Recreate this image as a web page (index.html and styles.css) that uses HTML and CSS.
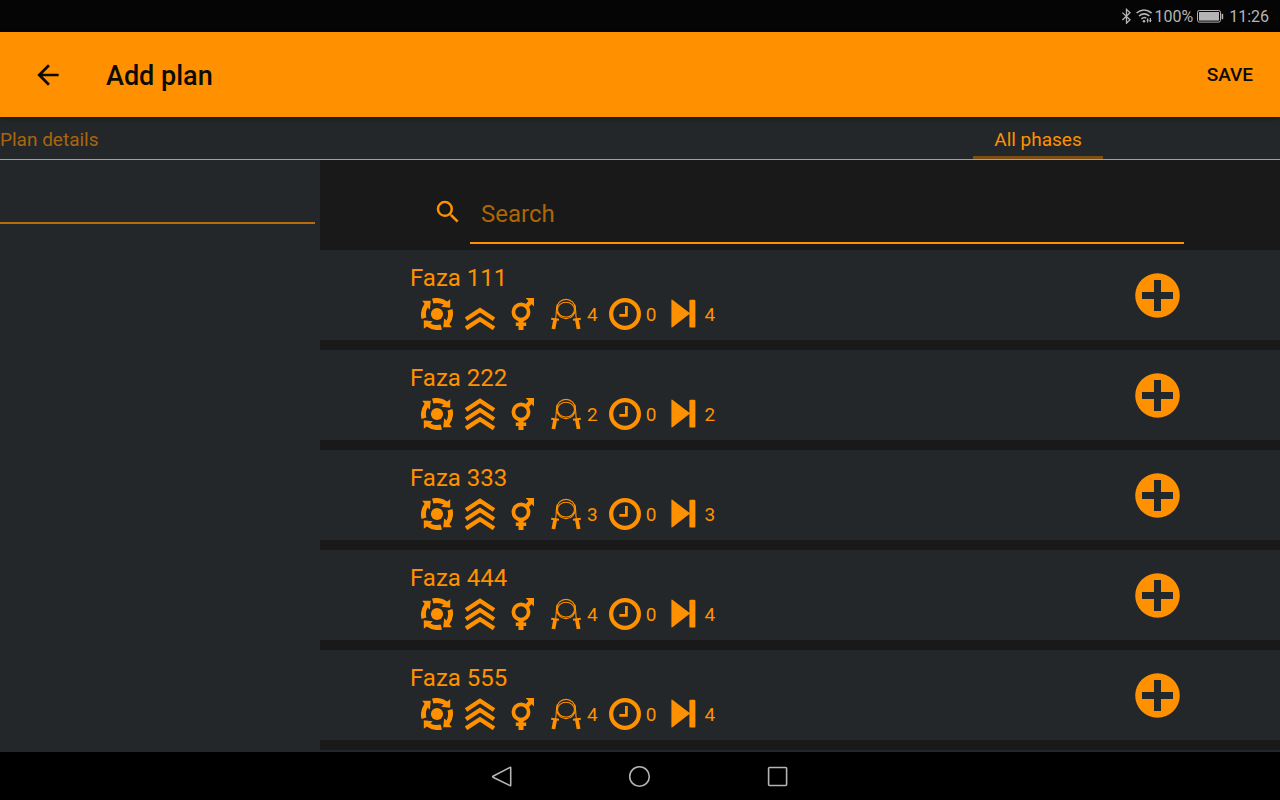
FILE: index.html
```html
<!DOCTYPE html>
<html lang="en">
<head>
<meta charset="utf-8">
<meta name="viewport" content="width=device-width, initial-scale=1">
<title>Add plan</title>
<link rel="stylesheet" href="styles.css">
</head>
<body>
<svg class="sprite" aria-hidden="true">
  <symbol id="target" viewBox="0 0 32 32">
    <circle cx="16" cy="16" r="6.1" fill="currentColor"/>
    <g id="turn">
      <path d="M11 .6Q19-1.6 26.2 3.6L29.2 1.2V9.8L20.2 8.8L22.6 6.6Q18 4 12.4 5.400Z" fill="currentColor"/>
    </g>
    <use href="#turn" transform="rotate(90 16 16)"/>
    <use href="#turn" transform="rotate(180 16 16)"/>
    <use href="#turn" transform="rotate(270 16 16)"/>
  </symbol>
  <symbol id="level2" viewBox="0 0 32 32">
    <path d="M2 21.2L16 12L30 21.2M2 30.4L16 21.2L30 30.4" fill="none" stroke="currentColor" stroke-width="4.3"/>
  </symbol>
  <symbol id="level3" viewBox="0 0 32 32">
    <path d="M2 12L16 2.8L30 12M2 21.2L16 12L30 21.2M2 30.4L16 21.2L30 30.4" fill="none" stroke="currentColor" stroke-width="4.3"/>
  </symbol>
  <symbol id="gender" viewBox="0 0 32 32">
    <circle cx="14" cy="14" r="7.6" fill="none" stroke="currentColor" stroke-width="3.7"/>
    <path d="M18.6 0H27V8.4Z" fill="currentColor"/>
    <path d="M19 9L24 3.6" stroke="currentColor" stroke-width="4.4"/>
    <path d="M11.5 22H16.5V24.5H19.2V28H16.5V32H11.5V28H8.8V24.5H11.5Z" fill="currentColor"/>
  </symbol>
  <symbol id="rope" viewBox="0 0 32 32">
    <g fill="none" stroke="currentColor" stroke-width="1.1">
      <ellipse cx="16" cy="11" rx="9.4" ry="9.6"/>
      <ellipse cx="16" cy="11.6" rx="8.5" ry="7.4"/>
      <path d="M7.4 6.5C5.6 11 6.8 15 5.6 21M24.6 6.5C26.4 11 25.2 15 26.4 21"/>
    </g>
    <path d="M1.2 20.8L9 21.8M30.8 20.8L23 21.8" stroke="currentColor" stroke-width="2"/>
    <path d="M5.2 21.5L3.4 31M26.8 21.5L28.6 31" stroke="currentColor" stroke-width="3.8"/>
  </symbol>
  <symbol id="clock" viewBox="0 0 32 32">
    <circle cx="16" cy="16" r="13.9" fill="none" stroke="currentColor" stroke-width="4.2"/>
    <path d="M17.4 8V17.4H10.4" fill="none" stroke="currentColor" stroke-width="2.8"/>
  </symbol>
  <symbol id="skip" viewBox="0 0 32 32">
    <path d="M4.4 2.2Q4.4 1 5.4 1.8L22.4 14.8V3Q22.4 1.8 23.6 1.8H27.2Q28.4 1.8 28.4 3V28.4Q28.4 29.6 27.2 29.6H23.6Q22.4 29.6 22.4 28.4V16L5.4 29.2Q4.4 30 4.4 28.8Z" fill="currentColor"/>
  </symbol>
  <symbol id="plus" viewBox="0 0 45 45">
    <path fill="currentColor" fill-rule="evenodd" d="M22.5 .2a22.3 22.3 0 1 1 0 44.6a22.3 22.3 0 1 1 0-44.6ZM19 7V19H7V26H19V38H26V26H38V19H26V7Z"/>
  </symbol>
</svg>

<div class="screen">
  <div class="status">
    <svg width="12" height="16" viewBox="0 0 12 16" fill="none" stroke="currentColor" stroke-width="1.3"><path d="M1.4 4.6L9 11.8L5.5 15.2V1.4L9 4.8L1.4 12"/></svg>
    <svg width="18" height="16" viewBox="0 0 18 16" fill="none" stroke="currentColor" stroke-width="1.6"><path d="M.6 5Q8-1 15.6 5M3 8Q8 3.6 13.4 8M5.4 10.8Q8 8.6 10.2 10"/><circle cx="8" cy="13.2" r="1.3" fill="currentColor" stroke="none"/><path d="M11.6 10.4V14.4M14.4 10V14" stroke-width="1.2"/><path d="M10.2 12.4L11.6 10.4L13 12.4ZM13 12.2L14.4 14.4L15.8 12.2Z" fill="currentColor" stroke="none"/></svg>
    <span>100%</span>
    <svg class="battery" width="28" height="14" viewBox="0 0 28 14"><rect x="1.5" y="1.5" width="23" height="11.6" rx="1.8" fill="none" stroke="currentColor"/><rect x="3" y="3" width="20" height="8.6" fill="currentColor"/><path d="M26.4 4.8V10.2" stroke="currentColor" stroke-width="1.6"/></svg>
    <span>11:26</span>
  </div>

  <header class="appbar">
    <button class="back" type="button" aria-label="Back"><svg width="32" height="32" viewBox="0 0 24 24"><path fill="currentColor" d="M20 11H7.83l5.59-5.59L12 4l-8 8 8 8 1.41-1.41L7.83 13H20v-2z"/></svg></button>
    <h1>Add plan</h1>
    <button class="save" type="button">SAVE</button>
  </header>

  <nav class="tabs">
    <button class="tab details" type="button">Plan details</button>
    <div class="tab-area"><button class="tab phases" type="button">All phases</button></div>
  </nav>

  <main class="content">
    <section class="side"><input class="side-input" type="text" aria-label="Plan name"></section>
    <section class="main">
      <label class="search">
        <svg width="30" height="30" viewBox="0 0 24 24"><path fill="currentColor" d="M15.5 14h-.79l-.28-.27A6.47 6.47 0 0 0 16 9.5 6.5 6.5 0 1 0 9.5 16c1.61 0 3.09-.59 4.23-1.57l.27.28v.79l5 4.99L20.49 19l-4.99-5zm-6 0C7.01 14 5 11.99 5 9.5S7.01 5 9.5 5 14 7.01 14 9.5 11.99 14 9.5 14z"/></svg>
        <input type="text" placeholder="Search" aria-label="Search">
      </label>
      <ul class="list" id="list"></ul>
    </section>
  </main>

  <footer class="navbar">
    <button type="button" aria-label="Back"><svg width="24" height="24" viewBox="0 0 24 24"><path d="M20 3.4Q20.7 3 20.7 3.8V21.2Q20.7 22 20 21.6L3 13.2Q2.3 12.7 3 12.2Z"/></svg></button>
    <button type="button" aria-label="Home"><svg width="24" height="24" viewBox="0 0 24 24"><circle cx="11.5" cy="12.5" r="9.8"/></svg></button>
    <button type="button" aria-label="Recent apps"><svg width="24" height="24" viewBox="0 0 24 24"><rect x="2.6" y="3.5" width="18" height="18" rx="1"/></svg></button>
  </footer>
</div>
<script src="script.js"></script>
</body>
</html>
```

FILE: styles.css
```css
* { box-sizing: border-box; }

body {
  margin: 0;
  background: #000;
  color: #ff9100;
  font-family: Roboto, "Liberation Sans", sans-serif;
}

button, input {
  margin: 0;
  padding: 0;
  border: 0;
  border-radius: 0;
  background: none;
  color: inherit;
  font: inherit;
  outline: 0;
}

svg { display: block; flex: none; }

.sprite { position: absolute; width: 0; height: 0; }

.screen {
  display: flex;
  flex-direction: column;
  height: 100vh;
}

.status {
  display: flex;
  align-items: center;
  justify-content: flex-end;
  flex: none;
  height: 32px;
  padding-right: 11px;
  background: #050505;
  color: #b4b4b4;
  font-size: 16px;
}

.status svg + svg { margin-left: 3px; }
.status .battery { margin: 0 5px 0 3px; }

.appbar {
  display: flex;
  align-items: center;
  flex: none;
  height: 85px;
  padding: 0 27px 0 32px;
  background: #ff9100;
  color: #0c0a06;
  box-shadow: 0 1px 5px rgba(0, 0, 0, .4);
  z-index: 1;
}

.appbar h1 {
  flex: 1;
  margin: 0 0 0 42px;
  padding-top: 2px;
  font-size: 27px;
  font-weight: 500;
}

.save { font-size: 19px; font-weight: 500; }

.tabs {
  display: flex;
  flex: none;
  height: 43px;
  border-bottom: 1px solid #ff9100;
  background: #23272a;
  font-size: 19px;
}

.tab { padding-top: 3px; }
.details { color: #a96610; }
.tab-area { display: flex; flex: 1; justify-content: flex-end; padding-right: 177px; }
.phases { width: 130px; border-bottom: 3px solid #7d4e13; padding-top: 6px; }

.content {
  display: flex;
  flex: 1;
  min-height: 0;
}

.side { width: 25%; background: #23272a; }

.side-input {
  display: block;
  width: calc(100% - 5px);
  height: 64px;
  padding: 20px 10px 0;
  border-bottom: 2px solid #b86c0b;
  font-size: 24px;
}

.main { flex: 1; overflow: hidden; background: #191919; }

.search {
  display: flex;
  align-items: flex-start;
  height: 90px;
  padding: 0 10% 0 113px;
}

.search svg { margin-top: 37px; }

.search input {
  flex: 1;
  min-width: 0;
  height: 84px;
  margin-left: 7px;
  padding: 26px 11px 0;
  border-bottom: 2px solid #ff9100;
  font-size: 24px;
}

.search input::placeholder { color: #ad6507; opacity: 1; }

.list {
  display: flex;
  flex-direction: column;
  gap: 10px;
  margin: 0;
  padding: 0;
  list-style: none;
}

.card {
  display: flex;
  align-items: center;
  justify-content: space-between;
  height: 90px;
  padding: 0 100px 0 90px;
  background: #23272a;
}

.card h2 {
  margin: 0 0 4px;
  padding-top: 2px;
  font-size: 24px;
  font-weight: 400;
  line-height: 32px;
}

.stats {
  display: flex;
  align-items: center;
  gap: 11px;
  padding-left: 11px;
  font-size: 19px;
}

.stats svg { width: 32px; height: 32px; overflow: hidden; }
.stat { display: flex; align-items: center; gap: 5px; }
.add, .add svg { width: 45px; height: 45px; }

.navbar {
  display: flex;
  align-items: center;
  justify-content: center;
  gap: 114px;
  flex: none;
  height: 48px;
  background: #000;
  color: #b4b4b4;
}

.navbar svg { fill: none; stroke: currentColor; stroke-width: 1.6; }
```

FILE: script.js
```js
const phases = [
  { name: "Faza 111", level: 2, count: 4 },
  { name: "Faza 222", level: 3, count: 2 },
  { name: "Faza 333", level: 3, count: 3 },
  { name: "Faza 444", level: 3, count: 4 },
  { name: "Faza 555", level: 3, count: 4 }
];

const icon = id => `<svg aria-hidden="true"><use href="#${id}"/></svg>`;
const stat = (id, value) => `<span class="stat">${icon(id)}<span>${value}</span></span>`;

document.getElementById("list").innerHTML = phases.map(p => `
  <li class="card">
    <div>
      <h2>${p.name}</h2>
      <div class="stats">${icon("target")}${icon("level" + p.level)}${icon("gender")}${stat("rope", p.count)}${stat("clock", 0)}${stat("skip", p.count)}</div>
    </div>
    <button class="add" type="button" aria-label="Add ${p.name}">${icon("plus")}</button>
  </li>`).join("") + `<li class="card"></li>`;
```
